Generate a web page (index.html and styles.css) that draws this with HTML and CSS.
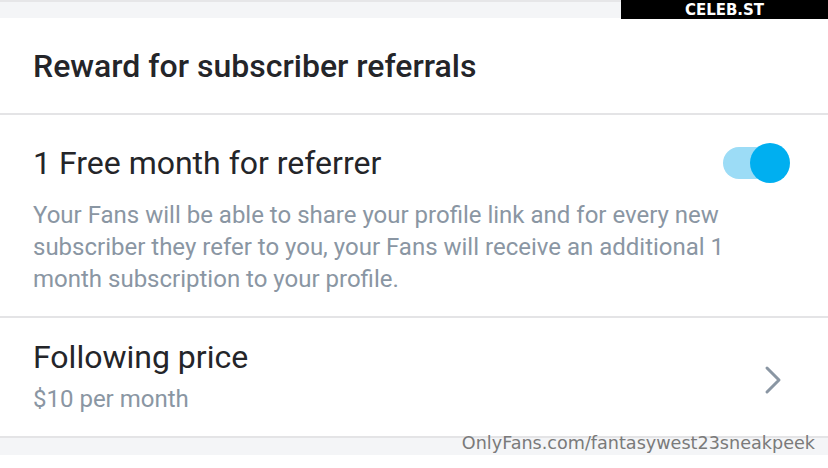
FILE: index.html
```html
<!DOCTYPE html>
<html lang="en">
<head>
    <meta charset="UTF-8">
    <meta name="viewport" content="width=device-width, initial-scale=1.0">
    <title>Referral settings</title>
    <link rel="stylesheet" href="styles.css">
</head>
<body>
    <div class="topStrip"></div>

    <div class="section header">
        <h1>Reward for subscriber referrals</h1>
    </div>

    <div class="section referrer">
        <div class="row">
            <span class="rowTitle">1 Free month for referrer</span>
            <label class="toggle">
                <input type="checkbox" checked>
                <span class="track"></span>
                <span class="knob"></span>
            </label>
        </div>
        <p class="desc">Your Fans will be able to share your profile link and for every new subscriber they refer to you, your Fans will receive an additional 1 month subscription to your profile.</p>
    </div>

    <div class="section price">
        <div class="priceText">
            <span class="rowTitle">Following price</span>
            <span class="sub">$10 per month</span>
        </div>
        <svg class="chevron" width="20" height="30" viewBox="0 0 20 30">
            <path d="M4 3 L16 15 L4 27" fill="none" stroke="#8a96a3" stroke-width="3" stroke-linecap="round" stroke-linejoin="round"/>
        </svg>
    </div>

    <div class="bottomStrip"></div>

    <div class="badge">CELEB.ST</div>
    <div class="watermark">OnlyFans.com/fantasywest23sneakpeek</div>
</body>
</html>
```

FILE: styles.css
```css
body {
    margin: 0;
    background-color: #fff;
    font-family: Roboto, "Noto Sans", sans-serif;
    color: #242529;
    overflow: hidden;
}

.topStrip {
    height: 16px;
    background-color: #f4f5f7;
    border-top: 2px solid #e6e6e8;
}

.section {
    background-color: #fff;
    border-bottom: 2px solid #e4e4e6;
    padding: 0 33px;
}

.header {
    height: 95px;
    display: flex;
    align-items: center;
}

h1 {
    margin: 0;
    font-size: 32px;
    font-weight: 500;
}

.referrer {
    height: 203px;
    padding-top: 28px;
    box-sizing: border-box;
}

.row {
    display: flex;
    justify-content: space-between;
    align-items: center;
    height: 40px;
}

.rowTitle {
    font-size: 32px;
    font-weight: 400;
}

.desc {
    margin: 16px 0 0;
    font-size: 24px;
    line-height: 32px;
    color: #8a96a3;
}

.toggle {
    position: relative;
    width: 67px;
    height: 40px;
    margin-right: 5px;
}

.toggle input {
    display: none;
}

.track {
    position: absolute;
    left: 0;
    top: 4px;
    width: 52px;
    height: 32px;
    border-radius: 16px;
    background-color: #9cdcf6;
}

.knob {
    position: absolute;
    right: 0;
    top: 0;
    width: 40px;
    height: 40px;
    border-radius: 50%;
    background-color: #00aff0;
}

.price {
    height: 118px;
    display: flex;
    justify-content: space-between;
    align-items: center;
}

.priceText {
    display: flex;
    flex-direction: column;
    gap: 9px;
    margin-top: -3px;
}

.sub {
    font-size: 24px;
    color: #8a96a3;
}

.chevron {
    margin-right: 12px;
    margin-top: 6px;
}

.bottomStrip {
    height: 17px;
    background-color: #f4f5f7;
}

.badge {
    position: absolute;
    top: 0;
    right: 0;
    width: 207px;
    height: 19px;
    background-color: #000;
    color: #fff;
    font-family: "DejaVu Sans", sans-serif;
    font-weight: bold;
    font-size: 15px;
    line-height: 21px;
    text-align: center;
}

.watermark {
    position: absolute;
    right: 13px;
    top: 433px;
    font-family: "DejaVu Sans", sans-serif;
    font-size: 17.6px;
    color: #7a7a7a;
}
```
